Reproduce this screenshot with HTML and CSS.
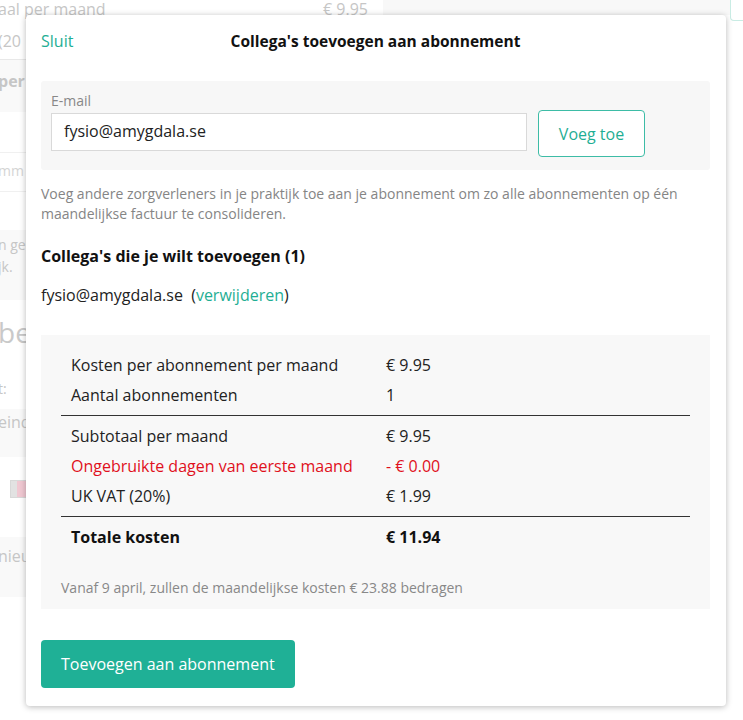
FILE: index.html
```html
<!DOCTYPE html>
<html lang="nl">
<head>
<meta charset="utf-8">
<title>Collega's toevoegen aan abonnement</title>
<link rel="stylesheet" href="styles.css">
</head>
<body>
<div class="screen">
  <div class="page">
    <div class="bg-row bg-top">
      <span class="bg-left">aal per maand</span>
      <span class="bg-price">€ 9.95</span>
      <span class="bg-spacer"></span>
      <span class="bg-corner"></span>
    </div>
    <div class="bg-row bg-vat"><span class="bg-left">(20</span></div>
    <div class="bg-row bg-shade bg-bold"><span class="bg-left">per</span></div>
    <div class="bg-row bg-gap"></div>
    <div class="bg-row bg-input"><span class="bg-left">mm</span></div>
    <div class="bg-row bg-gap2"></div>
    <div class="bg-row bg-shade bg-note"><span class="bg-left">n ge<br>jk.</span></div>
    <div class="bg-row bg-big"><span class="bg-left">be</span></div>
    <div class="bg-row bg-small"><span class="bg-left">t:</span></div>
    <div class="bg-row bg-shade bg-end"><span class="bg-left">eind</span></div>
    <div class="bg-row bg-icon"><span class="bg-ico"><span class="bg-ico-i"></span><span class="bg-ico-p"></span></span></div>
    <div class="bg-row bg-shade bg-new"><span class="bg-left">nieu</span></div>
  </div>

  <div class="modal">
    <header class="modal-head">
      <a class="close-link">Sluit</a>
      <h1 class="modal-title">Collega's toevoegen aan abonnement</h1>
      <span class="head-spacer"></span>
    </header>

    <div class="add-box">
      <div class="field">
        <label class="field-label">E-mail</label>
        <div class="field-input">fysio@amygdala.se</div>
      </div>
      <button class="btn-outline">Voeg toe</button>
    </div>

    <p class="intro">Voeg andere zorgverleners in je praktijk toe aan je abonnement om zo alle abonnementen op één maandelijkse factuur te consolideren.</p>

    <h2 class="sub-title">Collega's die je wilt toevoegen (1)</h2>
    <p class="colleague">fysio@amygdala.se&nbsp; (<a class="remove-link">verwijderen</a>)</p>

    <div class="summary">
      <div class="sum-group">
        <div class="sum-row"><span class="sum-label">Kosten per abonnement per maand</span><span class="sum-value">€ 9.95</span></div>
        <div class="sum-row"><span class="sum-label">Aantal abonnementen</span><span class="sum-value">1</span></div>
      </div>
      <div class="sum-group sep">
        <div class="sum-row"><span class="sum-label">Subtotaal per maand</span><span class="sum-value">€ 9.95</span></div>
        <div class="sum-row red"><span class="sum-label">Ongebruikte dagen van eerste maand</span><span class="sum-value">- € 0.00</span></div>
        <div class="sum-row"><span class="sum-label">UK VAT (20%)</span><span class="sum-value">€ 1.99</span></div>
      </div>
      <div class="sum-group sep">
        <div class="sum-row total"><span class="sum-label">Totale kosten</span><span class="sum-value">€ 11.94</span></div>
      </div>
      <p class="sum-note">Vanaf 9 april, zullen de maandelijkse kosten € 23.88 bedragen</p>
    </div>

    <button class="btn-primary">Toevoegen aan abonnement</button>
  </div>
</div>
</body>
</html>
```

FILE: styles.css
```css
* { box-sizing: border-box; }

html, body {
  margin: 0;
  padding: 0;
  background: #ffffff;
}

body {
  font-family: "Open Sans", "Noto Sans", "DejaVu Sans", sans-serif;
  color: #222222;
}

.screen {
  position: relative;
  width: 743px;
  height: 720px;
  overflow: hidden;
  background: #ffffff;
}

/* faded background page */
.page {
  width: 743px;
  color: #c6c6c6;
  font-size: 16px;
}

.bg-row {
  display: flex;
  align-items: flex-start;
}

.bg-left {
  display: block;
  margin-left: -2px;
  white-space: nowrap;
}

.bg-top {
  height: 22px;
  line-height: 18px;
}

.bg-top .bg-left { width: 325px; }
.bg-price { width: 60px; }
.bg-spacer { flex: 1; height: 15px; background: #f8f8f8; }
.bg-corner {
  width: 13px;
  height: 21px;
  border: 1px solid #c9ece4;
  border-right: 0;
  border-top: 0;
  border-radius: 0 0 0 4px;
}

.bg-vat {
  height: 38px;
  line-height: 38px;
  border-bottom: 1px solid #e8e8e8;
  width: 720px;
}

.bg-shade {
  background: #f9f9f9;
  width: 720px;
}

.bg-bold {
  height: 52px;
  padding-top: 10px;
  font-weight: 700;
  line-height: 22px;
}

.bg-gap { height: 40px; }

.bg-input {
  height: 40px;
  line-height: 36px;
  font-size: 14px;
  color: #d4d4d4;
  border-top: 1px solid #f0f0f0;
  border-bottom: 1px solid #f0f0f0;
  width: 720px;
}

.bg-gap2 { height: 38px; }

.bg-note {
  height: 70px;
  font-size: 14px;
  line-height: 22px;
  padding-top: 4px;
}

.bg-big {
  height: 64px;
  font-size: 28px;
  line-height: 64px;
  color: #c9c9c9;
}

.bg-small {
  height: 45px;
  font-size: 14px;
  line-height: 50px;
}

.bg-end {
  height: 48px;
  line-height: 26px;
}

.bg-icon {
  height: 80px;
  padding: 23px 0 0 10px;
}

.bg-ico {
  display: flex;
  width: 18px;
  height: 18px;
  border: 1px solid #d8d8d8;
}

.bg-ico-i { width: 6px; background: #e2e2e2; }
.bg-ico-p { flex: 1; background: #f0c8d2; }

.bg-new {
  height: 60px;
  line-height: 38px;
}

/* modal */
.modal {
  position: absolute;
  left: 26px;
  top: 15px;
  width: 700px;
  height: 691px;
  background: #ffffff;
  border-radius: 4px;
  box-shadow: 0 1px 6px rgba(0, 0, 0, 0.28);
  padding: 14px 16px 19px 15px;
}

.modal-head {
  display: grid;
  grid-template-columns: 1fr auto 1fr;
  align-items: center;
  height: 24px;
}

.close-link {
  font-size: 16px;
  line-height: 24px;
  color: #1fae94;
  cursor: pointer;
}

.modal-title {
  margin: 0;
  font-size: 15.5px;
  font-weight: 700;
  line-height: 24px;
  color: #111111;
  white-space: nowrap;
}

.add-box {
  margin-top: 28px;
  display: flex;
  align-items: flex-start;
  background: #f7f7f7;
  border-radius: 3px;
  padding: 11px 10px 13px;
  height: 89px;
}

.field {
  display: flex;
  flex-direction: column;
  width: 476px;
}

.field-label {
  font-size: 14px;
  line-height: 18px;
  color: #888888;
}

.field-input {
  margin-top: 3px;
  height: 38px;
  background: #ffffff;
  border: 1px solid #d9d9d9;
  padding: 0 12px;
  font-size: 16px;
  line-height: 35px;
  color: #222222;
}

.btn-outline {
  margin-left: 11px;
  margin-top: 18px;
  width: 107px;
  height: 47px;
  background: #ffffff;
  border: 1.5px solid #3dbca6;
  border-radius: 4px;
  font-family: inherit;
  font-size: 16px;
  color: #1fae94;
  padding: 0;
}

.intro {
  margin: 14px 0 0;
  font-size: 14px;
  line-height: 20px;
  color: #858585;
}

.sub-title {
  margin: 20px 0 0;
  font-size: 16px;
  font-weight: 700;
  line-height: 24px;
  color: #111111;
}

.colleague {
  margin: 15px 0 0;
  font-size: 16px;
  line-height: 24px;
  color: #222222;
}

.remove-link {
  color: #1fae94;
  cursor: pointer;
}

.summary {
  margin-top: 28px;
  background: #f8f8f8;
  padding: 15px 20px 11px;
}

.sum-group.sep {
  margin-top: 5px;
  border-top: 1px solid #333333;
  padding-top: 5px;
}

.sum-row {
  display: flex;
  height: 30px;
  align-items: center;
  font-size: 16px;
  color: #222222;
}

.sum-label {
  width: 325px;
  padding-left: 10px;
}

.sum-row.red { color: #e0101c; }

.sum-row.total { font-weight: 700; color: #111111; }

.sum-note {
  margin: 26px 0 0;
  font-size: 14px;
  line-height: 20px;
  color: #888888;
}

.btn-primary {
  margin-top: 31px;
  height: 48px;
  padding: 0 20px;
  background: #1fb096;
  border: 0;
  border-radius: 4px;
  font-family: inherit;
  font-size: 16px;
  color: #ffffff;
}
```
